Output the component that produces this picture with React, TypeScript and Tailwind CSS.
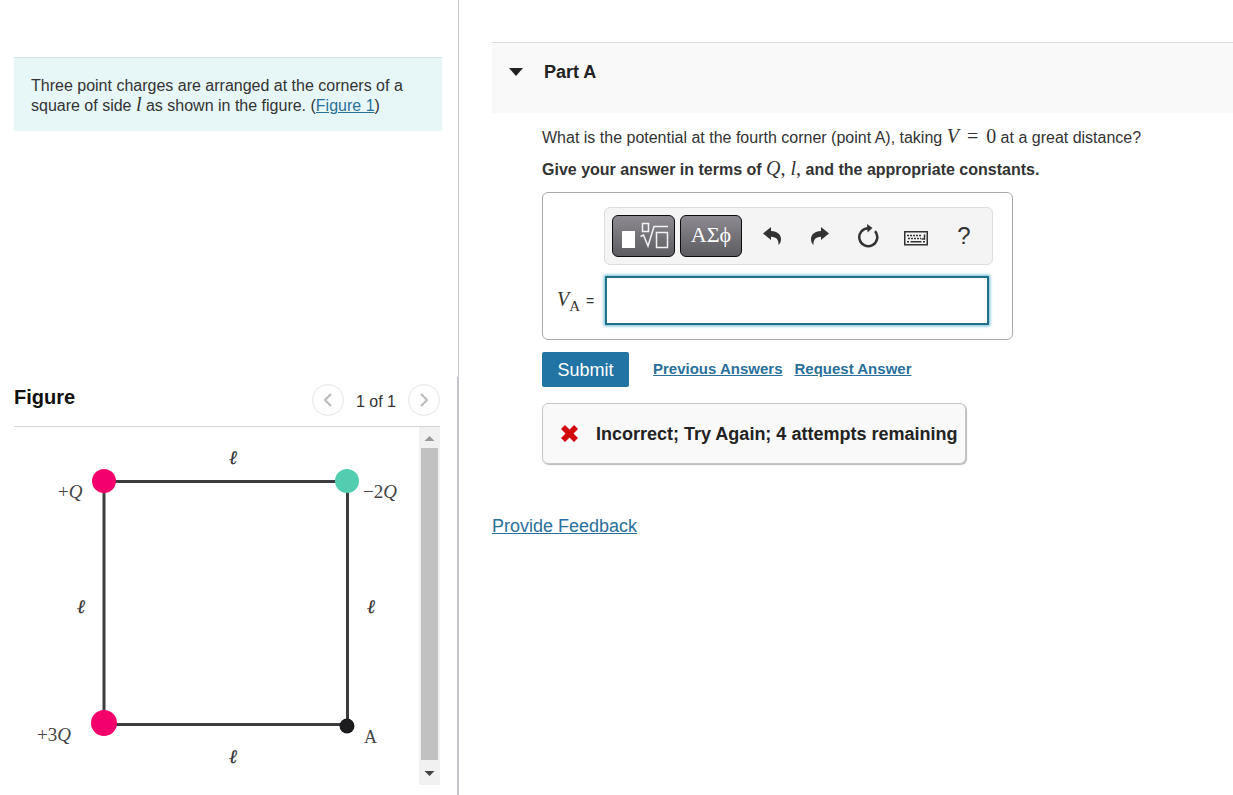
import { useState } from "react";
import type { ReactNode } from "react";

const mathFont = "font-['Liberation_Serif',serif]";

function MathText({ children, upright }: { children: ReactNode; upright?: boolean }) {
  return (
    <span className={`${mathFont} text-[20px] leading-3 font-normal ${upright ? "" : "italic"}`}>
      {children}
    </span>
  );
}

function ChargeDiagram() {
  return (
    <svg width="405" height="358" viewBox="0 0 405 358" role="img" aria-label="Square of charges">
      <g stroke="#3c3c3e" strokeWidth="3" fill="none">
        <path d="M90 54.5H333" />
        <path d="M90 54V297" />
        <path d="M333.5 54V298" />
        <path d="M90 297.5H333" />
      </g>
      <circle cx="90" cy="54" r="12" fill="#f4006c" />
      <circle cx="333" cy="54" r="12" fill="#52cdb0" />
      <circle cx="90" cy="296" r="13" fill="#f4006c" />
      <circle cx="333" cy="299" r="7.5" fill="#1c1b1d" />
      <g className={mathFont} fontSize="19" fill="#444">
        <text x="44" y="71">+<tspan fontStyle="italic">Q</tspan></text>
        <text x="349" y="71">−2<tspan fontStyle="italic">Q</tspan></text>
        <text x="23" y="314">+3<tspan fontStyle="italic">Q</tspan></text>
        <text x="350" y="316" fontSize="18">A</text>
      </g>
      <g className={mathFont} fontSize="19" fontStyle="italic" fill="#333" stroke="#333" strokeWidth="0.3">
        <text x="215" y="37">ℓ</text>
        <text x="63" y="186">ℓ</text>
        <text x="353" y="186">ℓ</text>
        <text x="215" y="336">ℓ</text>
      </g>
    </svg>
  );
}

function PagerButton({ label, d }: { label: string; d: string }) {
  return (
    <button
      aria-label={label}
      className="flex size-8 items-center justify-center rounded-full border border-[#e4e4e4] bg-white"
    >
      <svg width="16" height="16" viewBox="0 0 16 16" fill="none" stroke="#b8b8b8" strokeWidth="2">
        <path d={d} />
      </svg>
    </button>
  );
}

function FigurePanel() {
  return (
    <section className="flex grow flex-col border-r-2 border-[#c3c4cb] pr-[17px] pb-2.5 pl-3.5">
      <div className="flex h-[50px] items-center justify-between border-b border-[#d6d6d6]">
        <h2 className="pb-2.5 text-[20px] leading-6 font-bold text-[#111]">Figure</h2>
        <div className="flex items-center gap-3 pb-1">
          <PagerButton label="Previous figure" d="M11 2L5 8l6 6" />
          <span className="pt-1 text-base leading-5">1 of 1</span>
          <PagerButton label="Next figure" d="M5 2l6 6-6 6" />
        </div>
      </div>
      <div className="flex grow justify-between">
        <ChargeDiagram />
        <div className="flex w-[21px] flex-col items-center bg-[#f1f1f1]">
          <svg width="21" height="21" viewBox="0 0 21 21">
            <path d="M5.500 14L10.500 9l5 5z" fill="#999" />
          </svg>
          <div className="w-[17px] grow bg-[#c1c1c1]" />
          <svg width="21" height="25" viewBox="0 0 21 25">
            <path d="M5.500 11h10l-5 5z" fill="#444" />
          </svg>
        </div>
      </div>
    </section>
  );
}

const toolButton = "flex h-10 w-12 items-center justify-center text-[#333]";
const darkButton =
  "flex h-[42px] items-center justify-center rounded-md border border-[#0c0c0e] bg-linear-to-b from-[#8d8b91] to-[#5d5c61] text-white";

function Toolbar() {
  return (
    <div className="flex h-[58px] items-center rounded-md border border-[#dcdcdc] bg-[#f4f4f4] pr-1 pl-[7px]">
      <button aria-label="Templates" className={`${darkButton} w-[63px]`}>
        <svg width="50" height="32" viewBox="0 0 50 32" fill="none" stroke="#f3f3f3" strokeWidth="1.500">
          <path d="M3 11h13v17H3z" fill="#fff" stroke="none" />
          <path d="M23.500 3.500h6v8h-6z" />
          <path d="M21.500 16.500l3-1.500 4.500 11L35 6.500h14" />
          <path d="M37.500 12.500h11v15h-11z" />
        </svg>
      </button>
      <button
        aria-label="Greek symbols"
        className={`${darkButton} ml-[5px] w-[62px] pb-0.5 font-['Liberation_Serif',serif] text-[22px] leading-none`}
      >
        ΑΣϕ
      </button>
      <div className="ml-1.5 flex">
        <button aria-label="Undo" className={toolButton}>
          <svg width="20" height="20" viewBox="0 0 20 20" fill="currentColor">
            <path d="M1 7.500L9 1v4c6.500.3 10 3.500 10 8 0 2.500-.8 4.500-2.500 6 .4-5-2-8-7.500-8.200V14z" />
          </svg>
        </button>
        <button aria-label="Redo" className={toolButton}>
          <svg width="20" height="20" viewBox="0 0 20 20" fill="currentColor">
            <path d="M19 7.500L11 1v4C4.500 5.300 1 8.500 1 13c0 2.500.8 4.500 2.500 6-.4-5 2-8 7.500-8.200V14z" />
          </svg>
        </button>
        <button aria-label="Reset" className={toolButton}>
          <svg width="24" height="24" viewBox="0 0 24 24" fill="none">
            <path d="M12.500 4.200A9 9 0 1 0 19 7.200" stroke="currentColor" strokeWidth="2.500" />
            <path d="M11 0l5.500 4-5 4.500z" fill="currentColor" />
          </svg>
        </button>
        <button aria-label="Keyboard" className={`${toolButton} pt-1`}>
          <svg width="24" height="15" viewBox="0 0 24 15" fill="none" stroke="currentColor">
            <rect x="0.750" y="0.750" width="22.500" height="13" strokeWidth="1.500" />
            <path d="M3 4.500h15M4 7.500h13" strokeWidth="1.500" strokeDasharray="2 1" />
            <path d="M20.500 3.500v4.500h-3M3 10.800h2M6.500 10.800h11M19 10.800h2" strokeWidth="1.500" />
          </svg>
        </button>
        <button aria-label="Help" className={`${toolButton} text-[24px] leading-none`}>
          ?
        </button>
      </div>
    </div>
  );
}

function AnswerForm() {
  const [answer, setAnswer] = useState("");

  return (
    <form onSubmit={(e) => e.preventDefault()}>
      <div className="grid w-fit max-w-full grid-cols-[47px_auto] gap-y-[11px] rounded-md border border-[#aaa] py-3.5 pr-[19px] pl-3.5">
        <div className="col-start-2">
          <Toolbar />
        </div>
        <label htmlFor="answer" className="flex items-center gap-1.5 text-sm">
          <span>
            <MathText>V</MathText>
            <sub className={`${mathFont} bottom-[-5px] text-[15px]`}>A</sub>
          </span>
          =
        </label>
        <input
          id="answer"
          value={answer}
          onChange={(e) => setAnswer(e.target.value)}
          className="mr-1 ml-px h-[49px] border-2 border-[#21708a] bg-white px-2 text-lg shadow-[0_0_3px_1px_#67b7d6] outline-none"
        />
      </div>

      <div className="mt-3 flex items-center">
        <button type="submit" className="h-[35px] w-[87px] rounded-xs bg-[#2274a5] text-lg leading-none text-white">
          Submit
        </button>
        <a href="#previous" className="ml-6 text-[15px] font-bold text-[#29709a] underline">
          Previous Answers
        </a>
        <a href="#request" className="ml-3 text-[15px] font-bold text-[#29709a] underline">
          Request Answer
        </a>
      </div>
    </form>
  );
}

export default function App() {
  const [open, setOpen] = useState(true);

  return (
    <div className="flex min-h-screen bg-white font-['Liberation_Sans',Arial,sans-serif] text-base text-[#333]">
      <aside className="flex w-[459px] shrink-0 flex-col">
        <div className="h-[377px] border-r border-[#c4c4c8] pt-[57px] pr-4 pl-3.5">
          <p className="border-t border-[#d3e4e6] bg-[#e7f7f8] pt-[18px] pr-4 pb-[15px] pl-[17px] leading-5">
            Three point charges are arranged at the corners of a square of side <MathText>l</MathText> as shown in
            the figure. (
            <a href="#figure" className="text-[#29709a] underline">
              Figure 1
            </a>
            )
          </p>
        </div>
        <FigurePanel />
      </aside>

      <main className="min-w-0 grow pt-[42px] pl-[33px]">
        <div className="h-[71px] border-t border-[#dcdcdc] bg-[#f9f9f9] pt-[17px] pl-4">
          <button
            onClick={() => setOpen(!open)}
            aria-expanded={open}
            className="flex items-center gap-[21px] text-lg leading-6 font-bold text-[#222]"
          >
            <svg width="15" height="9" viewBox="0 0 15 9" fill="#222">
              <path d="M1 0h14L8 8z" />
            </svg>
            Part A
          </button>
        </div>

        {open && (
          <div className="pt-[15px] pl-[50px]">
            <p className="leading-5">
              What is the potential at the fourth corner (point A), taking <MathText>V</MathText>
              <span className="mx-2">
                <MathText upright>=</MathText>
              </span>
              <MathText upright>0</MathText> at a great distance?
            </p>
            <p className="mt-3 mb-3 leading-5 font-bold">
              Give your answer in terms of <MathText>Q</MathText>
              <MathText upright>, </MathText>
              <MathText>l</MathText>
              <MathText upright>,</MathText> and the appropriate constants.
            </p>
            <AnswerForm />
            <div
              role="status"
              className="mt-4 flex h-[61px] w-fit items-center gap-[17px] rounded-md border border-[#c6c6c6] bg-[#f9f9f9] pr-2 pl-[17px] text-lg font-bold text-[#222] shadow-[1px_1px_1px_#bbb]"
            >
              <svg width="19" height="19" viewBox="0 0 19 19" fill="#d3060e">
                <path d="M5 1l4.500 4.500L14 1l4 4-4.500 4.500L18 14l-4 4-4.500-4.500L5 18l-4-4 4.500-4.500L1 5z" />
              </svg>
              Incorrect; Try Again; 4 attempts remaining
            </div>
          </div>
        )}

        <a href="#feedback" className="mt-12 inline-block text-lg text-[#29709a] underline">
          Provide Feedback
        </a>
      </main>
    </div>
  );
}
